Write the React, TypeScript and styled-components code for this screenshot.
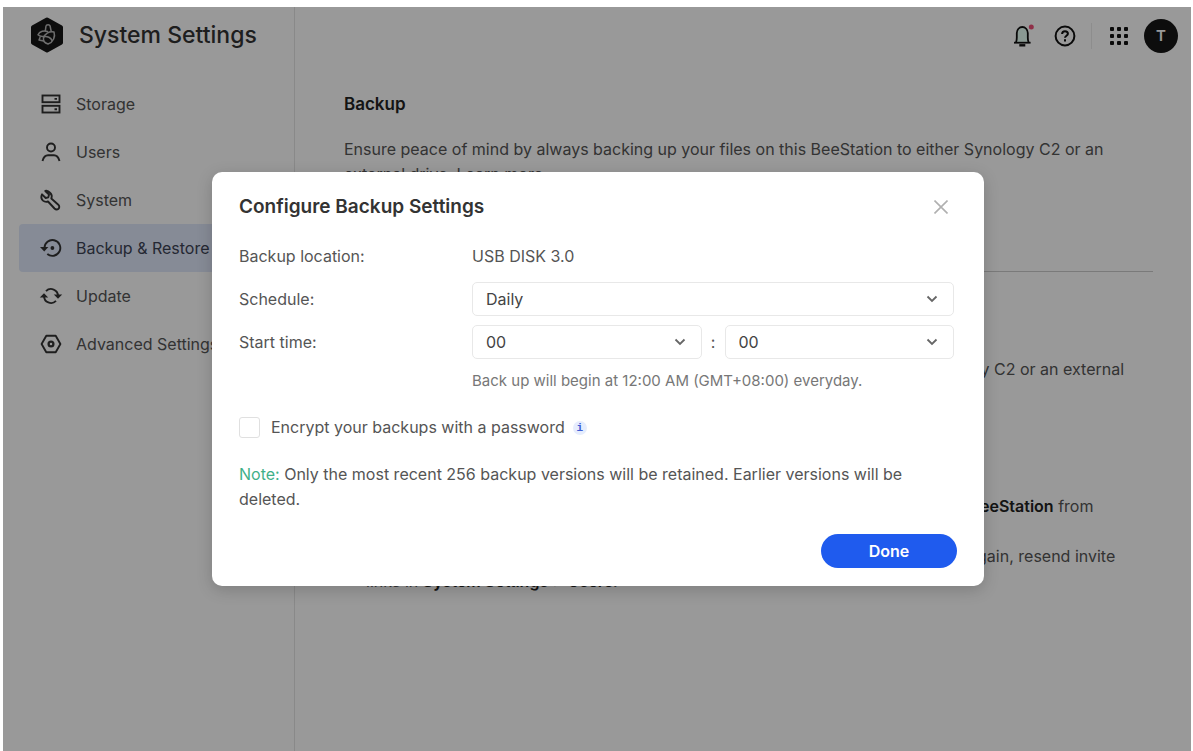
import React from "react";
import styled, { createGlobalStyle, css } from "styled-components";

const GlobalStyle = createGlobalStyle`
  *, *::before, *::after { box-sizing: border-box; }
  body {
    margin: 0;
    background: #fff;
    font-family: Inter, "Liberation Sans", sans-serif;
    font-size: 16px;
    line-height: 25px;
    color: #555;
  }
  button, select, input { font: inherit; color: inherit; }
  h1, h2, p, ol { margin: 0; }
`;

const Page = styled.div`
  display: flex;
  min-height: 100vh;
  padding: 7px 2px 0 3px;
`;

const Frame = styled.div`
  position: relative;
  display: grid;
  grid-template-columns: 292px 1fr;
  flex: 1;
  background: #fff;
`;

const Sidebar = styled.aside`
  border-right: 1px solid #e4e4e4;
`;

const Brand = styled.div`
  display: flex;
  align-items: center;
  gap: 14px;
  height: 56px;
  padding-left: 26px;
`;

const BrandName = styled.h1`
  font-size: 23px;
  line-height: 30px;
  font-weight: 500;
  color: #333;
`;

const Nav = styled.nav`
  display: flex;
  flex-direction: column;
  padding: 17px 16px 0 16px;
`;

const NavLink = styled.a<{ $active?: boolean }>`
  display: flex;
  align-items: center;
  gap: 15px;
  height: 48px;
  padding-left: 22px;
  border-radius: 4px;
  white-space: nowrap;
  color: #555;
  text-decoration: none;
  ${(p) => p.$active && css`background: #e0e8fa; color: #3c4455;`}
  svg { color: #333; flex: none; }
`;

const Main = styled.main`
  min-width: 0;
`;

const TopBar = styled.header`
  display: flex;
  align-items: center;
  justify-content: flex-end;
  height: 57px;
  padding-right: 13px;
`;

const IconButton = styled.button`
  display: grid;
  place-items: center;
  width: 43px;
  height: 40px;
  padding: 0;
  border: 0;
  background: none;
  color: #111;
`;

const Divider = styled.span`
  width: 1px;
  height: 26px;
  margin: 0 5px;
  background: #ececec;
`;

const Avatar = styled.button`
  width: 34px;
  height: 34px;
  margin-left: 4px;
  padding: 0;
  border: 0;
  border-radius: 50%;
  background: #161616;
  color: #fff;
  font-size: 15px;
  font-weight: 600;
`;

const Section = styled.section`
  margin: 0 38px 0 49px;
  padding: 28px 0 38px;
  & + & {
    padding-top: 40px;
    border-top: 1px solid #ccc;
  }
`;

const SectionTitle = styled.h2`
  margin-bottom: 20px;
  font-size: 17px;
  line-height: 25px;
  font-weight: 600;
  color: #222;
`;

const OutlineButton = styled.button`
  height: 32px;
  margin-top: 14px;
  padding: 0 20px;
  border: 1px solid #bbb;
  border-radius: 16px;
  background: #fff;
`;

const Steps = styled.ol`
  margin-top: 87px;
  padding-left: 22px;
  white-space: nowrap;
  b { font-weight: 600; color: #222; }
`;

const Overlay = styled.div`
  position: absolute;
  inset: 0;
  display: flex;
  align-items: center;
  justify-content: center;
  padding-left: 2px;
  background: rgba(0, 0, 0, 0.4);
`;

const Dialog = styled.form`
  width: 772px;
  max-width: 100%;
  padding: 20px 27px 18px;
  border-radius: 10px;
  background: #fff;
  box-shadow: 0 4px 16px rgba(0, 0, 0, 0.18);
`;

const DialogHeader = styled.div`
  display: flex;
  align-items: center;
  justify-content: space-between;
  height: 30px;
  margin-bottom: 17px;
`;

const DialogTitle = styled.h2`
  font-size: 19px;
  line-height: 30px;
  font-weight: 600;
  color: #333;
`;

const CloseButton = styled.button`
  display: grid;
  place-items: center;
  width: 32px;
  height: 30px;
  padding: 0;
  border: 0;
  background: none;
  color: #b0b0b0;
`;

const Fields = styled.div`
  display: flex;
  flex-direction: column;
  gap: 9px;
  padding-right: 3px;
`;

const Field = styled.div`
  display: grid;
  grid-template-columns: 233px 1fr;
  align-items: center;
  min-height: 34px;
`;

const TimeInputs = styled.div`
  display: grid;
  grid-template-columns: 1fr 23px 1fr;
  align-items: center;
  text-align: center;
`;

const SelectBox = styled.div`
  display: grid;
  align-items: center;
  svg {
    grid-area: 1 / 1;
    justify-self: end;
    margin-right: 16px;
    color: #666;
    pointer-events: none;
  }
`;

const Select = styled.select`
  grid-area: 1 / 1;
  width: 100%;
  height: 34px;
  padding: 0 13px;
  border: 1px solid #e8e8e8;
  border-radius: 5px;
  background: #fff;
  appearance: none;
  color: #444;
`;

const Hint = styled.p`
  padding-left: 233px;
  font-size: 15px;
  line-height: 25px;
  color: #777;
`;

const CheckRow = styled.div`
  display: flex;
  align-items: center;
  margin: 22px 0;
  label { margin: 0 8px 0 11px; }
`;

const CheckBox = styled.input`
  width: 21px;
  height: 21px;
  margin: 0;
  border: 1px solid #e0e0e0;
  border-radius: 3px;
  background: #fff;
  appearance: none;
`;

const InfoButton = styled.button`
  width: 14px;
  height: 14px;
  padding: 0;
  border: 0;
  border-radius: 50%;
  background: #e6edfd;
  color: #3f5fd6;
  font: 700 11px/14px "Liberation Mono", monospace;
`;

const Note = styled.p`
  span { color: #3fb089; }
`;

const DialogFooter = styled.div`
  display: flex;
  justify-content: flex-end;
  margin-top: 22px;
`;

const DoneButton = styled.button`
  width: 136px;
  height: 34px;
  border: 0;
  border-radius: 17px;
  background: #1f5bee;
  color: #fff;
  font-weight: 600;
`;

const Icon = ({ children }: { children: React.ReactNode }) => (
  <svg width="20" height="20" viewBox="0 0 20 20" fill="none" stroke="currentColor" strokeWidth="1.9" overflow="visible" aria-hidden="true">
    {children}
  </svg>
);

const Logo = () => (
  <svg width="36" height="36" viewBox="0 0 36 36" aria-hidden="true">
    <path d="M18 2.500 32 10.200V25.800L18 33.500 4 25.800V10.200Z" fill="#161616" stroke="#161616" strokeWidth="4" strokeLinejoin="round" />
    <g fill="none" stroke="#b8b8b8" strokeWidth="1.500" strokeLinejoin="round" strokeLinecap="round">
      <path d="M16.300 13.800 17 9c.3-1.800 3.700-1.800 4.100 0l1 4.800" />
      <path d="M18.500 14.500c-3-1.200-8-.3-9.500 3.200 1.500 1.500 4 2 6.500 1.500" />
      <path d="M14.500 21c1-4 5.500-7 10.500-6 1.500 4.500-.5 10-6 12-3-.8-5-3-4.500-6Z" />
      <path d="M15.500 19.500c2.500-.5 6.500 1.200 7.500 4M11 20.500l-1 2.500 4.500 1" />
    </g>
  </svg>
);

const ICONS: Record<string, React.ReactNode> = {
  Storage: (
    <>
      <rect x="1.500" y="1.500" width="17" height="6.700" />
      <rect x="1.500" y="11.800" width="17" height="6.700" />
      <path d="M13.500 4.900h2.500M13.500 15.200h2.500" />
    </>
  ),
  Users: (
    <>
      <circle cx="10" cy="5.500" r="4" />
      <path d="M1.500 19c1-3.500 3-5.700 5.500-5.700h6c2.500 0 4.500 2.200 5.500 5.700" />
    </>
  ),
  System: (
    <path d="M4.300 1 8 4.700 7.300 7.300 4.700 8 1 4.300C-.2 6.800.3 9 2 10.600c1.500 1.300 3.300 1.500 5 .9l6.500 7c1.200 1.200 2.900 1.200 4 .2s1-2.800-.2-4l-7-6.200c.8-2 .5-4-1-5.500C7.700 1.300 6 .3 4.300 1Z" strokeLinejoin="round" />
  ),
  "Backup & Restore": (
    <>
      <path d="M3.500 10a7.900 7.900 0 1 1 2.800 6" />
      <path d="M-1 9h8.400l-4.200 4.600Z" fill="currentColor" stroke="none" />
      <circle cx="11.400" cy="10" r="1.900" fill="currentColor" stroke="none" />
    </>
  ),
  Update: (
    <>
      <path d="M3 10a7 7 0 0 0 12 4.900M17 10A7 7 0 0 0 5 5.100" />
      <path d="M-1.200 11.500 3 7.300l4.200 4.200ZM21.200 8.500 17 12.700l-4.200-4.200Z" fill="currentColor" stroke="none" />
    </>
  ),
  "Advanced Settings": (
    <>
      <path d="M5.300 1.800h9.400L19.400 10l-4.700 8.200H5.300L.6 10Z" strokeLinejoin="round" />
      <circle cx="10" cy="10" r="2.400" strokeWidth="2.300" />
    </>
  ),
};

const Chevron = () => (
  <svg width="12" height="8" viewBox="0 0 12 8" fill="none" stroke="currentColor" strokeWidth="1.800" aria-hidden="true">
    <path d="m1.500 1.500 4.500 4.500 4.500-4.500" />
  </svg>
);

const Dropdown = ({ id, label, options }: { id: string; label?: string; options: string[] }) => (
  <SelectBox>
    <Select id={id} aria-label={label}>
      {options.map((o) => <option key={o}>{o}</option>)}
    </Select>
    <Chevron />
  </SelectBox>
);

export default function App() {
  return (
    <>
      <GlobalStyle />
      <Page>
        <Frame>
          <Sidebar>
            <Brand>
              <Logo />
              <BrandName>System Settings</BrandName>
            </Brand>
            <Nav>
              {Object.keys(ICONS).map((name) => (
                <NavLink key={name} href="#" $active={name === "Backup & Restore"}>
                  <Icon>{ICONS[name]}</Icon>
                  {name}
                </NavLink>
              ))}
            </Nav>
          </Sidebar>
          <Main>
            <TopBar>
              <IconButton aria-label="Notifications">
                <svg width="24" height="24" viewBox="0 0 24 24" fill="none" stroke="currentColor" strokeWidth="1.800" aria-hidden="true">
                  <path d="M6 18.500c.6-1.500.8-3 .8-5V9a5.500 6 0 0 1 11 0v4.500c0 2 .2 3.500.8 5" fill="#e6fff6" />
                  <path d="M4 18.700h16.600" />
                  <path d="M9.300 21.300h6" strokeWidth="2.400" />
                  <circle cx="21.300" cy="3" r="2.500" fill="#ee4f78" stroke="none" />
                </svg>
              </IconButton>
              <IconButton aria-label="Help">
                <svg width="22" height="22" viewBox="0 0 22 22" fill="none" stroke="currentColor" strokeWidth="2" aria-hidden="true">
                  <circle cx="11" cy="11" r="9.400" />
                  <path d="M8.100 9c0-1.800 1.300-2.800 2.900-2.800s2.900 1 2.900 2.500c0 2-2.900 2.100-2.900 4.100M11 14.300v2.200" />
                </svg>
              </IconButton>
              <Divider />
              <IconButton aria-label="Apps">
                <svg width="18" height="18" viewBox="0 0 18 18" fill="currentColor" aria-hidden="true">
                  {[0, 7, 14].map((y) => [0, 7, 14].map((x) => <rect key={`${x}-${y}`} x={x} y={y} width="4" height="4" rx="1" />))}
                </svg>
              </IconButton>
              <Avatar aria-label="Account">T</Avatar>
            </TopBar>
            <Section>
              <SectionTitle>Backup</SectionTitle>
              <p>
                Ensure peace of mind by always backing up your files on this BeeStation to either Synology C2 or an external drive. Learn more
              </p>
              <OutlineButton>Create Backup</OutlineButton>
            </Section>
            <Section>
              <SectionTitle>Restore</SectionTitle>
              <p>
                Restore files and users on your BeeStation from a backup version stored on Synology C2 or an external drive.
              </p>
              <Steps>
                <li>To restore the data to a new device, please reset it first and then select <b>Restore BeeStation</b> from<br />the setup page.</li>
                <li>Once the restoration is complete, other users should join again. To let them join again, resend invite<br />links in <b>System Settings</b> &gt; <b>Users</b>.</li>
              </Steps>
            </Section>
          </Main>
          <Overlay>
            <Dialog role="dialog" aria-labelledby="dialog-title" onSubmit={(e) => e.preventDefault()}>
              <DialogHeader>
                <DialogTitle id="dialog-title">Configure Backup Settings</DialogTitle>
                <CloseButton type="button" aria-label="Close">
                  <svg width="14" height="14" viewBox="0 0 14 14" stroke="currentColor" strokeWidth="1.600" aria-hidden="true">
                    <path d="m.5.5 13 13M13.500.5l-13 13" />
                  </svg>
                </CloseButton>
              </DialogHeader>
              <Fields>
                <Field>
                  <span>Backup location:</span>
                  <span>USB DISK 3.0</span>
                </Field>
                <Field>
                  <label htmlFor="schedule">Schedule:</label>
                  <Dropdown id="schedule" options={["Daily", "Weekly"]} />
                </Field>
                <Field>
                  <label htmlFor="hour">Start time:</label>
                  <TimeInputs>
                    <Dropdown id="hour" options={["00", "01"]} />
                    <span>:</span>
                    <Dropdown id="minute" label="Minute" options={["00", "30"]} />
                  </TimeInputs>
                </Field>
                <Hint>Back up will begin at 12:00 AM (GMT+08:00) everyday.</Hint>
              </Fields>
              <CheckRow>
                <CheckBox type="checkbox" id="encrypt" />
                <label htmlFor="encrypt">Encrypt your backups with a password</label>
                <InfoButton type="button" aria-label="More information">i</InfoButton>
              </CheckRow>
              <Note>
                <span>Note:</span> Only the most recent 256 backup versions will be retained. Earlier versions will be deleted.
              </Note>
              <DialogFooter>
                <DoneButton type="submit">Done</DoneButton>
              </DialogFooter>
            </Dialog>
          </Overlay>
        </Frame>
      </Page>
    </>
  );
}
